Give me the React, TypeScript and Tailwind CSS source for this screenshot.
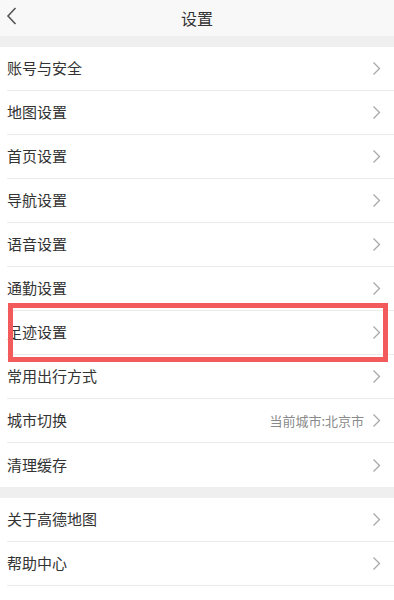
import React from "react";

const Chevron = () => (
  <svg width="9" height="15" viewBox="0 0 9 15" fill="none" className="shrink-0">
    <path d="M1.5 1.5 L7.5 7.5 L1.5 13.5" stroke="#a8a8a8" strokeWidth="1.3" />
  </svg>
);

const Row = ({ label, right, last }: { label: string; right?: string; last?: boolean }) => (
  <div className="flex h-[44px] items-center bg-white pl-[7px]">
    <div className={`flex h-full flex-1 items-center pr-[13px] ${last ? "" : "border-b border-[#ececec]"}`}>
      <span className="flex-1 text-[15px] text-[#333333]">{label}</span>
      {right && <span className="mr-[8px] text-[13px] text-[#8a8a8a]">{right}</span>}
      <Chevron />
    </div>
  </div>
);

export default function App() {
  const group1 = [
    "账号与安全",
    "地图设置",
    "首页设置",
    "导航设置",
    "语音设置",
    "通勤设置",
    "足迹设置",
    "常用出行方式",
  ];
  return (
    <div
      className="relative h-[600px] w-[394px] overflow-hidden bg-[#efefef]"
      style={{ fontFamily: '"Noto Sans CJK SC", "Noto Sans", sans-serif' }}
    >
      <div className="relative flex h-[36px] items-center justify-center bg-[#f8f8f8]">
        <svg width="12" height="20" viewBox="0 0 12 20" fill="none" className="absolute left-[6px] top-[6px]">
          <path d="M9.5 2 L2 10 L9.5 18" stroke="#555555" strokeWidth="1.6" />
        </svg>
        <span className="text-[16px] text-[#333333]">设置</span>
      </div>
      <div className="h-[11px]" />
      <div>
        {group1.map((l) => (
          <Row key={l} label={l} />
        ))}
        <Row label="城市切换" right="当前城市:北京市" />
        <Row label="清理缓存" last />
      </div>
      <div className="h-[11px]" />
      <div>
        <Row label="关于高德地图" />
        <Row label="帮助中心" />
        <Row label="去给高德评分" last />
      </div>
      <div className="absolute left-[8px] top-[303px] h-[59px] w-[380px] border-[5px] border-[#f25a5c]" />
    </div>
  );
}
